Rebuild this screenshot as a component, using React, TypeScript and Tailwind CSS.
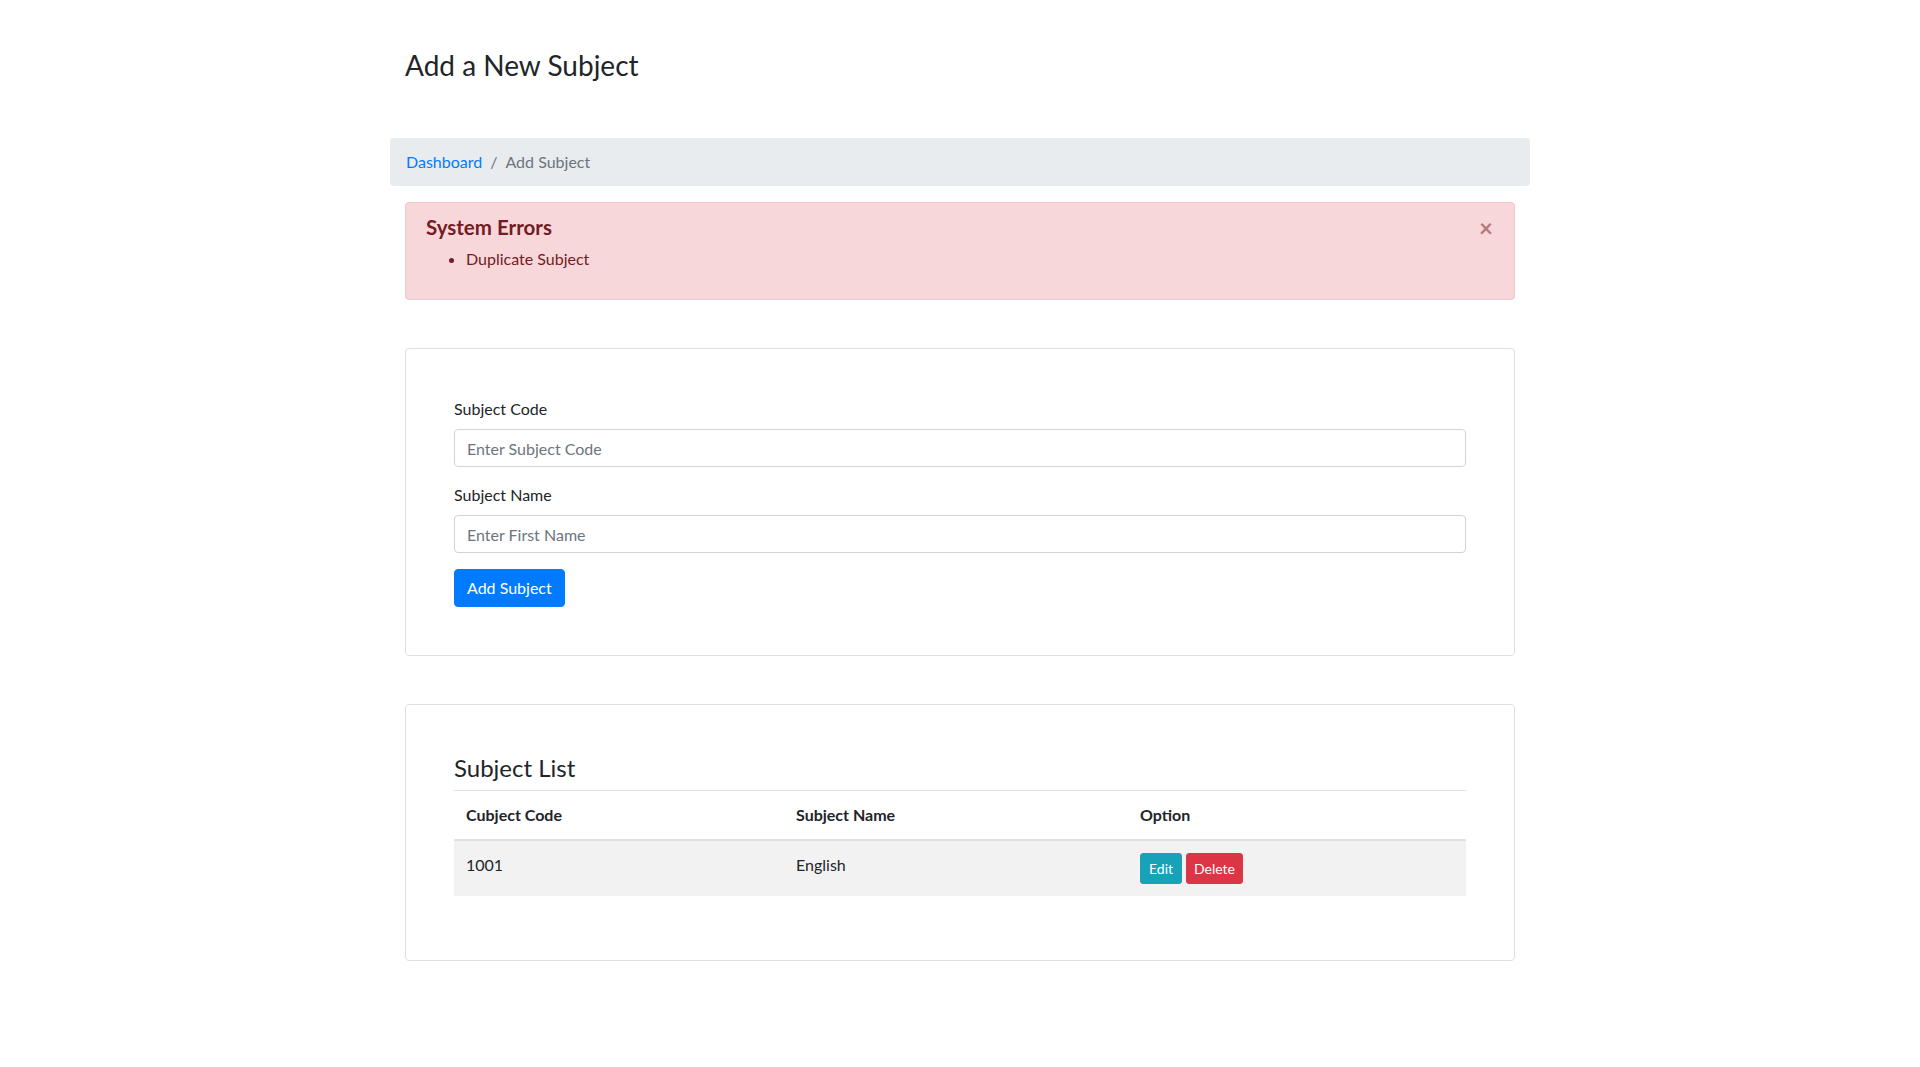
import React from 'react'

const subjects = [{ code: '1001', name: 'English' }]

export default function App() {
  return (
    <div
      className="min-h-screen bg-white text-[#212529] text-[16px] leading-6"
      style={{ fontFamily: 'Lato, "Open Sans", Arial, sans-serif' }}
    >
      <div className="w-[1140px] mx-auto">
        {/* Title */}
        <div className="px-[15px] pt-[48px]">
          <h3 className="text-[28px] leading-[34px] font-normal">Add a New Subject</h3>
        </div>

        {/* Breadcrumb */}
        <nav className="mt-[56px] h-12 bg-[#e9ecef] rounded px-4 flex items-center">
          <a href="#" className="text-[#007bff]">Dashboard</a>
          <span className="px-2 text-[#6c757d]">/</span>
          <span className="text-[#6c757d]">Add Subject</span>
        </nav>

        <div className="px-[15px]">
          {/* Alert */}
          <div className="relative mt-4 border border-[#f5c6cb] bg-[#f8d7da] text-[#721c24] rounded pt-3 pb-3 pl-5 pr-16">
            <h5 className="text-[20.5px] leading-6 font-bold mb-2">System Errors</h5>
            <ul className="list-disc pl-10 mb-4">
              <li>Duplicate Subject</li>
            </ul>
            <button
              type="button"
              className="absolute top-0 right-0 pl-5 pr-[21px] pt-[13px] pb-3 text-[24px] leading-6 font-bold text-[#b5797f]"
            >
              ×
            </button>
          </div>

          {/* Form card */}
          <div className="mt-12 border border-[#dfdfdf] rounded p-12">
            <div className="mb-4">
              <label className="block mb-2">Subject Code</label>
              <input
                placeholder="Enter Subject Code"
                className="block w-full h-[38px] border border-[#ced4da] rounded px-3 placeholder:text-[#6c757d] outline-none"
              />
            </div>
            <div className="mb-4">
              <label className="block mb-2">Subject Name</label>
              <input
                placeholder="Enter First Name"
                className="block w-full h-[38px] border border-[#ced4da] rounded px-3 placeholder:text-[#6c757d] outline-none"
              />
            </div>
            <button
              type="button"
              className="h-[38px] px-3 bg-[#007bff] border border-[#007bff] text-white rounded"
            >
              Add Subject
            </button>
          </div>

          {/* List card */}
          <div className="mt-12 border border-[#dfdfdf] rounded p-12">
            <h4 className="text-[24px] leading-[29px] font-normal mb-2">Subject List</h4>
            <table className="w-full border-collapse mb-4">
              <thead>
                <tr>
                  <th className="w-[330px] text-left font-bold p-3 border-t border-b-2 border-[#dee2e6]">
                    Cubject Code
                  </th>
                  <th className="w-[344px] text-left font-bold p-3 border-t border-b-2 border-[#dee2e6]">
                    Subject Name
                  </th>
                  <th className="text-left font-bold p-3 border-t border-b-2 border-[#dee2e6]">
                    Option
                  </th>
                </tr>
              </thead>
              <tbody>
                {subjects.map((s) => (
                  <tr key={s.code} className="bg-[#f2f2f2]">
                    <td className="p-3 align-top">{s.code}</td>
                    <td className="p-3 align-top">{s.name}</td>
                    <td className="p-3 align-top">
                      <div className="flex gap-1">
                        <button
                          type="button"
                          className="px-2 py-1 text-[14px] leading-[21px] bg-[#17a2b8] border border-[#17a2b8] text-white rounded-[3px]"
                        >
                          Edit
                        </button>
                        <button
                          type="button"
                          className="px-[7px] py-1 text-[14px] leading-[21px] bg-[#dc3545] border border-[#dc3545] text-white rounded-[3px]"
                        >
                          Delete
                        </button>
                      </div>
                    </td>
                  </tr>
                ))}
              </tbody>
            </table>
          </div>
        </div>
      </div>
    </div>
  )
}
